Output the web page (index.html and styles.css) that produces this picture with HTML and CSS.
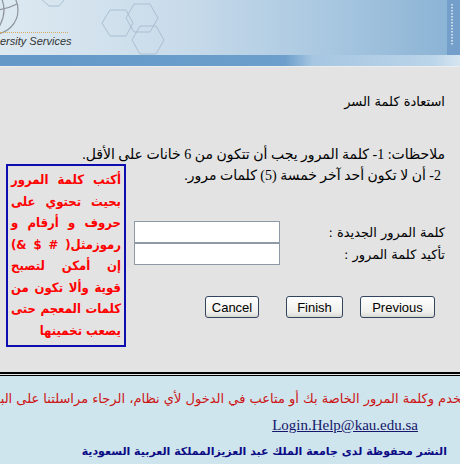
FILE: index.html
```html
<!DOCTYPE html>
<html lang="ar" dir="rtl">
<head>
  <meta charset="UTF-8">
  <title>استعادة كلمة السر</title>
  <link rel="stylesheet" href="styles.css">
</head>
<body>
  <!-- الترويسة -->
  <div class="banner">
    <svg class="banner-art" width="460" height="55" viewBox="0 0 460 55">
      <g fill="none" stroke="#8e949b" stroke-width="1.2">
        <circle cx="-6" cy="10" r="24"/>
        <path d="M-6 -14 Q 14 10 -6 34"/>
        <path d="M-30 4 Q -6 16 17 4"/>
      </g>
      <g fill="none" stroke="#a9c0d3" stroke-width="1">
        <polygon points="41,-1 49,-6 59,-6 64,0 59,6 49,6"/>
        <polygon points="102,23 110,10 126,10 133,23 126,36 110,36"/>
        <polygon points="126,18 134,4 150,4 158,18 150,32 134,32"/>
        <polygon points="132,40 140,26 156,26 164,40 156,54 140,54"/>
      </g>
      <rect x="447" y="0" width="13" height="55" fill="#739fca"/>
      <line x1="452" y1="4" x2="452" y2="46" stroke="#e8f0f8" stroke-width="1.5" stroke-dasharray="1.5 1.5"/>
    </svg>
    <div class="brand">
      <span class="brand-line"></span>
      <span class="brand-text">ersity Services</span>
    </div>
  </div>
  <div class="band"></div>

  <div class="main">
    <h1 class="title">استعادة كلمة السر</h1>
    <p class="note">ملاحظات: 1- كلمة المرور يجب أن تتكون من 6 خانات على الأقل.</p>

    <div class="content">
      <div class="form-col">
        <p class="note note-2">2- أن لا تكون أحد آخر خمسة (5) كلمات مرور.</p>

        <div class="fields">
          <label for="newPass">كلمة المرور الجديدة :</label>
          <input type="password" id="newPass">
          <label for="confirmPass">تأكيد كلمة المرور :</label>
          <input type="password" id="confirmPass">
        </div>

        <div class="buttons">
          <button class="btn btn-prev">Previous</button>
          <button class="btn btn-finish">Finish</button>
          <button class="btn btn-cancel">Cancel</button>
        </div>
      </div>

      <!-- نصيحة كلمة المرور -->
      <div class="tip">
        <span class="tip-line">أكتب كلمة المرور</span>
        <span class="tip-line">بحيث تحتوي على</span>
        <span class="tip-line">حروف و أرقام و</span>
        <span class="tip-line">رموزمثل( # $ &amp;)</span>
        <span class="tip-line">إن أمكن لتصبح</span>
        <span class="tip-line">قوية وألا تكون من</span>
        <span class="tip-line">كلمات المعجم حتى</span>
        <span class="tip-line last">يصعب تخمينها</span>
      </div>
    </div>
  </div>

  <div class="rule"></div>

  <div class="footer">
    <p class="help"><span>المستخدم وكلمة المرور الخاصة بك أو متاعب في الدخول لأي نظام، الرجاء مراسلتنا على البريد الالكتروني</span></p>
    <p class="mail"><a href="#">Login.Help@kau.edu.sa</a></p>
    <p class="copy">النشر محفوظة لدى جامعة الملك عبد العزيزالمملكة العربية السعودية</p>
  </div>
</body>
</html>
```

FILE: styles.css
```css
body {
  margin: 0;
  direction: rtl;
  font-family: "DejaVu Sans", sans-serif;
  background-color: #cfe5ee;
  color: #000;
  overflow: hidden;
}

/* الترويسة */
.banner {
  position: relative;
  height: 55px;
  background: linear-gradient(to right, #dde9f1 0%, #c8dbea 40%, #aac8e1 70%, #8cb4d5 97%);
  direction: ltr;
  overflow: hidden;
}

.banner-art {
  position: absolute;
  top: 0;
  left: 0;
}

.brand {
  position: relative;
  display: flex;
  flex-direction: column;
  align-items: flex-start;
  padding-top: 32px;
}

.brand-line {
  width: 68px;
  border-top: 1px dotted #d6ad62;
}

.brand-text {
  margin-top: 2px;
  font-family: "Liberation Sans", Arial, sans-serif;
  font-style: italic;
  font-size: 11px;
  line-height: 12px;
  color: #333;
}

.band {
  height: 11px;
  background: linear-gradient(to right, #6398c7 0%, #6c9fcb 62%, #a6c6e1 68%, #bad4e9 94%, #d6e6f1 100%);
  border-bottom: 1px solid #eceeef;
}

/* المحتوى */
.main {
  background-color: #e3e3e3;
  padding: 27px 15px 25px 0;
}

.title {
  margin: 0;
  font-size: 13px;
  font-weight: normal;
  line-height: 16px;
}

.note {
  margin: 35px 0 0;
  font-family: "Liberation Serif", "DejaVu Sans", serif;
  font-size: 14px;
  line-height: 19px;
  white-space: nowrap;
}

.content {
  display: flex;
  margin-right: -15px;
}

.form-col {
  flex: 1;
  padding: 0 15px 0 8px;
}

.note-2 {
  margin: 2px 4px 0 0;
}

.fields {
  display: grid;
  grid-template-columns: auto 146px;
  grid-auto-rows: 22px;
  justify-content: space-between;
  align-items: center;
  margin-top: 36px;
  font-size: 13px;
}

.fields input {
  box-sizing: border-box;
  width: 146px;
  height: 22px;
  margin: 0;
  border: 1px solid #8e9ba7;
  background-color: #fff;
}

.buttons {
  display: flex;
  margin: 31px 10px 0 0;
}

.btn {
  height: 22px;
  padding: 0;
  border: 1px solid #33445f;
  border-radius: 3px;
  background: linear-gradient(#fefefe, #efefec 75%, #d9d9d3);
  font-family: "Liberation Sans", Arial, sans-serif;
  font-size: 13px;
  color: #000;
}

.btn-prev { width: 75px; }
.btn-finish { width: 57px; margin-right: 17px; }
.btn-cancel { width: 54px; margin-right: 27px; }

.tip {
  box-sizing: border-box;
  width: 120px;
  height: 183px;
  margin-left: 6px;
  padding: 3px 3px 4px;
  border: 2px solid #0d0db0;
  color: #ff0000;
  font-family: "DejaVu Sans Condensed", "DejaVu Sans", sans-serif;
  font-weight: bold;
  font-size: 13px;
}

.tip-line {
  display: block;
  line-height: 21.5px;
  text-align: justify;
  text-align-last: justify;
  white-space: nowrap;
}

.tip-line.last {
  text-align-last: right;
}

.rule {
  height: 1px;
  background-color: #e3e3e3;
  border-top: 2px solid #000;
  border-bottom: 1px solid #000;
}

/* التذييل */
.footer {
  height: 100px;
  padding-top: 14px;
}

.footer p {
  margin: 0;
}

.help {
  white-space: nowrap;
  font-size: 13px;
  line-height: 18px;
  color: #cc1414;
}

.help span {
  display: inline-block;
  margin-right: -32px;
}

.mail {
  margin-top: 8px !important;
  padding-right: 42px;
  font-family: "Liberation Serif", "Times New Roman", serif;
  font-size: 15px;
  line-height: 18px;
}

.mail a {
  color: #16166a;
}

.copy {
  margin-top: 10px !important;
  padding-right: 13px;
  font-size: 11px;
  font-weight: bold;
  line-height: 16px;
  color: #0b0b84;
}
```
